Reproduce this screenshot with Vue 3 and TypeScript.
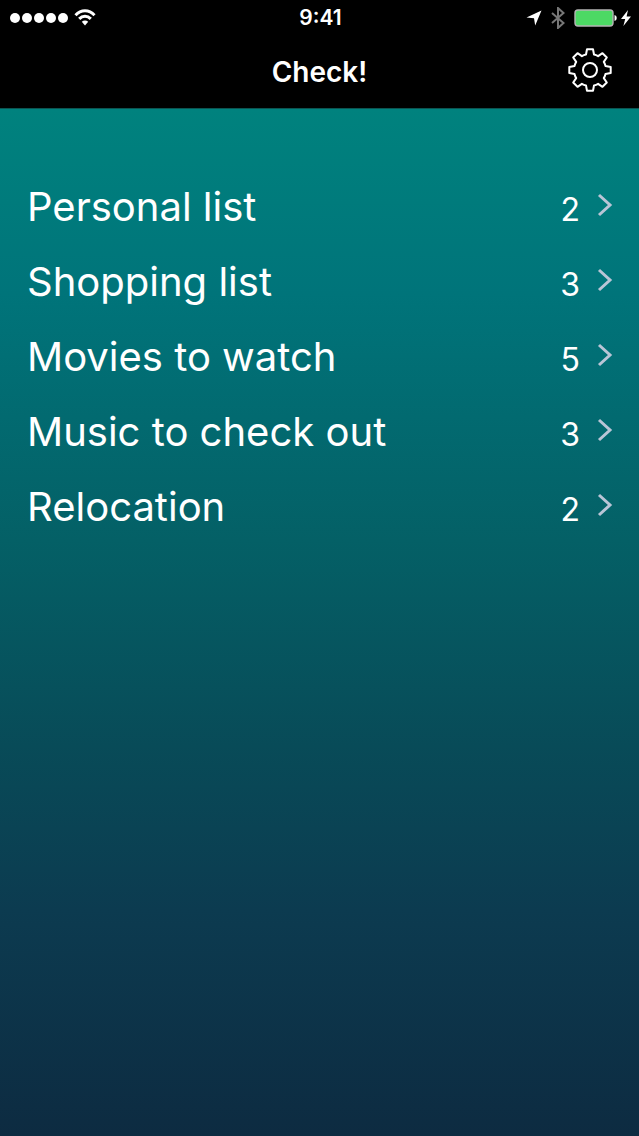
<script setup lang="ts">
interface CheckList {
  name: string
  count: number
}

const lists: CheckList[] = [
  { name: 'Personal list', count: 2 },
  { name: 'Shopping list', count: 3 },
  { name: 'Movies to watch', count: 5 },
  { name: 'Music to check out', count: 3 },
  { name: 'Relocation', count: 2 },
]
</script>

<template>
  <div class="screen">
    <header class="header">
      <div class="status">
        <div class="signal">
          <span v-for="n in 5" :key="n" class="dot"></span>
          <svg class="wifi" width="22" height="18" viewBox="0 0 22 18" aria-hidden="true">
            <path d="M1.5 6.2C7 0.4 15 0.4 20.5 6.2" />
            <path d="M5.2 9.9C8.6 6.3 13.4 6.3 16.8 9.9" />
            <path class="solid" d="M11 16.6L7.8 12.8C9.6 11 12.4 11 14.2 12.8Z" />
          </svg>
        </div>
        <span class="time">9:41</span>
        <div class="indicators">
          <svg width="16" height="16" viewBox="0 0 16 16" aria-hidden="true">
            <path d="M15.5 0.5L9.2 15.5L8 8.2L0.5 7.4Z" fill="#fff" />
          </svg>
          <svg class="bluetooth" width="14" height="22" viewBox="0 0 14 22" aria-hidden="true">
            <path d="M1 6L12.5 16L7 21V1L12.5 6L1 16" />
          </svg>
          <svg class="battery" width="44" height="18" viewBox="0 0 44 18" aria-hidden="true">
            <rect x="1" y="1" width="38" height="16" rx="3" fill="#4cd964" stroke="#b4b4b4" stroke-width="1.4" />
            <path d="M40.5 6C43.4 6.6 43.4 11.4 40.5 12Z" fill="#fff" />
          </svg>
          <svg width="10" height="16" viewBox="0 0 10 16" aria-hidden="true">
            <path d="M7 0L0 9H4.2L2.4 16L10 6.6H5.6Z" fill="#fff" />
          </svg>
        </div>
      </div>
      <div class="nav">
        <h1 class="title">Check!</h1>
        <button class="settings" type="button" aria-label="Settings">
          <svg width="46" height="46" viewBox="-23 -23 46 46" aria-hidden="true">
            <path
              d="M-3-20.7H3L4-15.5Q6.2-15 8.1-13.8L12.5-16.8L16.8-12.5L13.8-8.1Q15-6.2 15.5-4L20.7-3V3L15.5 4Q15 6.2 13.8 8.1L16.8 12.5L12.5 16.8L8.1 13.8Q6.2 15 4 15.5L3 20.7H-3L-4 15.5Q-6.2 15-8.1 13.8L-12.5 16.8L-16.8 12.5L-13.8 8.1Q-15 6.2-15.5 4L-20.7 3V-3L-15.5-4Q-15-6.2-13.8-8.1L-16.8-12.5L-12.5-16.8L-8.1-13.8Q-6.2-15-4-15.5Z"
            />
            <circle r="7" />
          </svg>
        </button>
      </div>
    </header>
    <main class="content">
      <ul class="lists">
        <li v-for="list in lists" :key="list.name">
          <a class="row" href="#">
            <span class="name">{{ list.name }}</span>
            <span class="count">{{ list.count }}</span>
            <svg class="chevron" width="16" height="24" viewBox="0 0 16 24" aria-hidden="true">
              <path d="M2 2L13 12L2 22" />
            </svg>
          </a>
        </li>
      </ul>
    </main>
  </div>
</template>

<style>
body {
  margin: 0;
}
</style>

<style scoped>
.screen {
  display: flex;
  flex-direction: column;
  min-height: 100vh;
  background: #000;
  color: #fff;
  font-family: Inter, "Liberation Sans", sans-serif;
}

.status {
  display: grid;
  grid-template-columns: 1fr auto 1fr;
  align-items: center;
  height: 35px;
  padding: 0 8px 0 10px;
}

.signal {
  display: flex;
  align-items: center;
  gap: 2px;
}

.dot {
  width: 10px;
  height: 10px;
  border-radius: 50%;
  background: #fff;
}

.wifi {
  margin-left: 4px;
  fill: none;
  stroke: #fff;
  stroke-width: 3;
}

.wifi .solid {
  fill: #fff;
  stroke: none;
}

.time {
  font-size: 21px;
  font-weight: 600;
  line-height: 35px;
}

.indicators {
  display: flex;
  align-items: center;
  justify-content: flex-end;
}

.bluetooth {
  margin: 0 9px;
  fill: none;
  stroke: #777;
  stroke-width: 2;
}

.battery {
  margin-right: 3px;
}

.nav {
  display: grid;
  grid-template-columns: 1fr auto 1fr;
  align-items: center;
  height: 73px;
  padding: 0 26px;
  border-bottom: 1px solid #0b5552;
}

.title {
  grid-column: 2;
  margin: 0;
  font-size: 28px;
  font-weight: 600;
  line-height: 36px;
}

.settings {
  justify-self: end;
  display: flex;
  padding: 0 0 4px;
  border: 0;
  background: none;
}

.settings svg {
  fill: none;
  stroke: #fff;
  stroke-width: 2;
  stroke-linejoin: round;
}

.content {
  flex: 1;
  padding-top: 60px;
  background: linear-gradient(
    #00827e 0%,
    #00747a 18%,
    #046066 42%,
    #084b58 62%,
    #0c3b50 78%,
    #0d2b41 100%
  );
}

.lists {
  margin: 0;
  padding: 0;
  list-style: none;
}

.row {
  display: flex;
  align-items: center;
  height: 75px;
  padding: 0 26px 0 27px;
  color: inherit;
  text-decoration: none;
}

.name {
  flex: 1;
  font-size: 40px;
  line-height: 75px;
}

.count {
  padding-top: 6px;
  font-size: 32px;
  line-height: 69px;
}

.chevron {
  margin: 0 0 4px 17px;
  fill: none;
  stroke: #b9c5d6;
  stroke-width: 3;
}
</style>
